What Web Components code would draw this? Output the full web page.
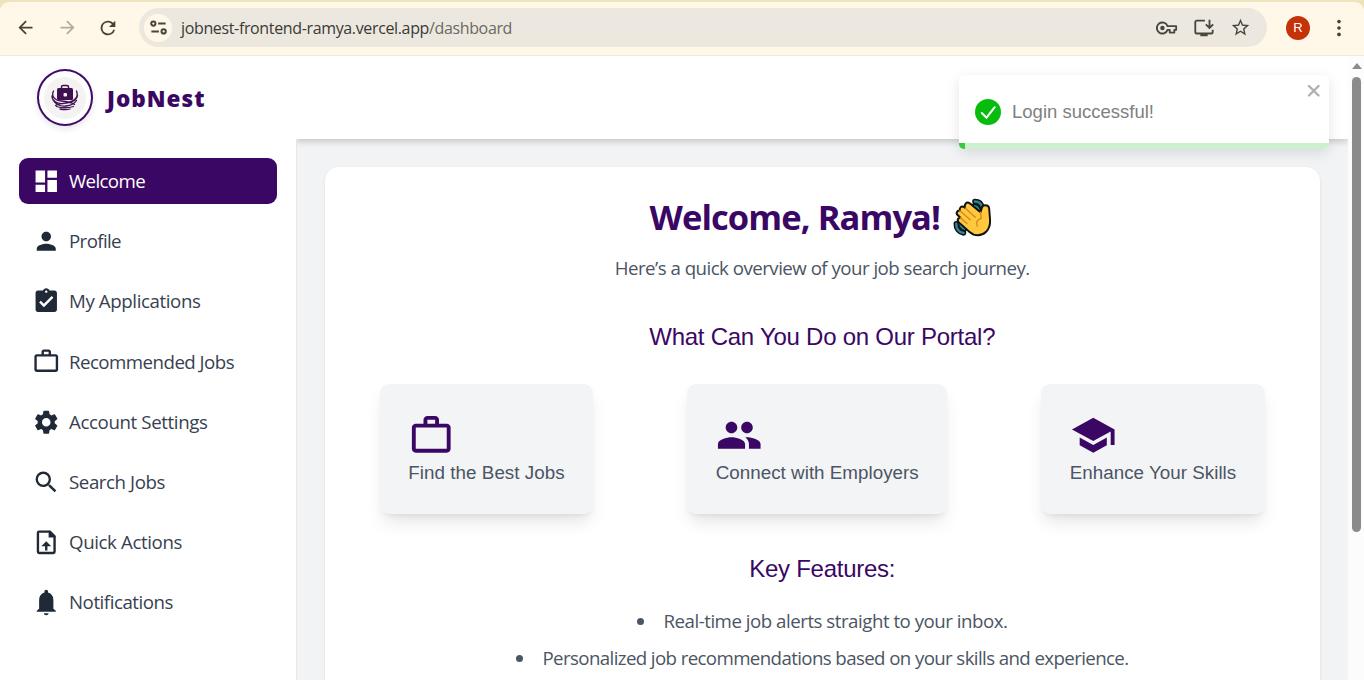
<!DOCTYPE html>
<html lang="en"><head><meta charset="utf-8"><title>JobNest</title>
<style>
html,body{margin:0;height:100%;overflow:hidden}
body{font-family:"Open Sans","Noto Sans",sans-serif;color:#1f2937;background:#fff}
</style></head><body>
<job-app></job-app>
<script>
const ICONS={
dashboard:'<path d="M3 13h8V3H3v10zm0 8h8v-6H3v6zm10 0h8V11h-8v10zm0-18v6h8V3h-8z"/>',
person:'<path d="M12 12c2.21 0 4-1.79 4-4s-1.79-4-4-4-4 1.79-4 4 1.79 4 4 4zm0 2c-2.67 0-8 1.34-8 4v2h16v-2c0-2.66-5.33-4-8-4z"/>',
assignment:'<path d="M19 3h-4.18C14.4 1.84 13.3 1 12 1c-1.3 0-2.4.84-2.82 2H5c-1.1 0-2 .9-2 2v14c0 1.1.9 2 2 2h14c1.1 0 2-.9 2-2V5c0-1.1-.9-2-2-2zm-7 0c.55 0 1 .45 1 1s-.45 1-1 1-1-.45-1-1 .45-1 1-1zm-2 14l-4-4 1.41-1.41L10 14.17l6.59-6.59L18 9l-8 8z"/>',
work:'<path fill-rule="evenodd" d="M14 6V4h-4v2h4zM4 8v11h16V8H4zm16-2c1.11 0 2 .89 2 2v11c0 1.11-.89 2-2 2H4c-1.11 0-2-.89-2-2l.01-11c0-1.11.88-2 1.99-2h4V4c0-1.11.89-2 2-2h4c1.11 0 2 .89 2 2v2h4z"/>',
settings:'<path d="M19.14 12.94c.04-.3.06-.61.06-.94 0-.32-.02-.64-.07-.94l2.03-1.58a.49.49 0 0 0 .12-.61l-1.92-3.32a.488.488 0 0 0-.59-.22l-2.39.96c-.5-.38-1.03-.7-1.62-.94l-.36-2.54a.484.484 0 0 0-.48-.41h-3.84c-.24 0-.43.17-.47.41l-.36 2.54c-.59.24-1.13.57-1.62.94l-2.39-.96c-.22-.08-.47 0-.59.22L2.74 8.87c-.12.21-.08.47.12.61l2.03 1.58c-.05.3-.09.63-.09.94s.02.64.07.94l-2.03 1.58a.49.49 0 0 0-.12.61l1.92 3.32c.12.22.37.29.59.22l2.39-.96c.5.38 1.03.7 1.62.94l.36 2.54c.05.24.24.41.48.41h3.84c.24 0 .44-.17.47-.41l.36-2.54c.59-.24 1.13-.56 1.62-.94l2.39.96c.22.08.47 0 .59-.22l1.92-3.32c.12-.22.07-.47-.12-.61l-2.01-1.58zM12 15.6c-1.98 0-3.6-1.62-3.6-3.6s1.62-3.6 3.6-3.6 3.6 1.62 3.6 3.6-1.62 3.6-3.6 3.6z"/>',
search:'<path d="M15.5 14h-.79l-.28-.27A6.471 6.471 0 0 0 16 9.5 6.5 6.5 0 1 0 9.5 16c1.61 0 3.09-.59 4.23-1.57l.27.28v.79l5 4.99L20.49 19l-4.99-5zm-6 0C7.01 14 5 11.99 5 9.5S7.01 5 9.5 5 14 7.01 14 9.5 11.99 14 9.5 14z"/>',
upload:'<path fill="none" stroke="currentColor" stroke-width="2" stroke-linejoin="round" d="M15 3H6a1 1 0 0 0-1 1v16a1 1 0 0 0 1 1h12a1 1 0 0 0 1-1V7z"/><path d="M14 3v5h5l1-1-5-5zM12 11.2L7.8 15.4H11V19h2v-3.600h3.200z"/>',
bell:'<path d="M12 23c1.100 0 2-.7 2-1.700h-4c0 1 .9 1.700 2 1.700zm6-5.500V10c0-3.100-1.600-5.400-4.500-6.200V3c0-.83-.67-1.500-1.500-1.500s-1.500.67-1.500 1.500v.8C7.600 4.600 6 6.900 6 10v7.500l-2 1.700v.8h16v-.8z"/>',
people:'<path d="M16 11c1.66 0 2.990-1.340 2.990-3S17.660 5 16 5s-3 1.340-3 3 1.340 3 3 3zm-8 0c1.660 0 2.990-1.340 2.990-3S9.660 5 8 5 5 6.340 5 8s1.340 3 3 3zm0 2c-2.330 0-7 1.170-7 3.500V19h14v-2.500C15 14.170 10.330 13 8 13zm8 0c-.29 0-.62.02-.97.05 1.160.84 1.970 1.970 1.970 3.450V19h6v-2.500c0-2.330-4.670-3.500-7-3.500z"/>',
school:'<path d="M5 13.180v4L12 21l7-3.820v-4L12 17l-7-3.820zM12 3L1 9l11 6 9-4.910V17h2V9L12 3z"/>',
back:'<path d="M20 11H7.830l5.590-5.590L12 4l-8 8 8 8 1.410-1.410L7.830 13H20z"/>',
forward:'<path d="M12 4l-1.410 1.410L16.170 11H4v2h12.170l-5.580 5.590L12 20l8-8z"/>',
reload:'<path d="M17.650 6.350A8 8 0 1 0 19.730 14h-2.080A6 6 0 1 1 12 6c1.660 0 3.140.69 4.220 1.780L13 11h7V4z"/>',
tune:'<g fill="none" stroke="currentColor" stroke-width="2.500"><circle cx="5.500" cy="7" r="2.700"/><path d="M11.500 7h9.500M3 17h9.500"/><circle cx="18.500" cy="17" r="2.700"/></g>',
key:'<path fill="none" stroke="currentColor" stroke-width="2" stroke-linejoin="round" d="M12.600 10A6 6 0 1 0 12.600 14H15v3h5v-3h2v-4z"/><circle cx="7" cy="12" r="2.400"/>',
install:'<path fill="none" stroke="currentColor" stroke-width="2" d="M13 4H4a1.500 1.500 0 0 0-1.500 1.500v11A1.500 1.500 0 0 0 4 18h16a1.500 1.500 0 0 0 1.500-1.500V14M18 3v8M14 8l4 4 4-4"/><path d="M8 18h8v3H8z"/>',
star:'<path d="M22 9.240l-7.190-.62L12 2 9.190 8.630 2 9.240l5.460 4.730L5.820 21 12 17.270 18.180 21l-1.630-7.030L22 9.240zM12 15.400l-3.760 2.270 1-4.280-3.320-2.880 4.380-.38L12 6.100l1.710 4.040 4.380.38-3.320 2.880 1 4.280L12 15.400z"/>',
more:'<circle cx="12" cy="5" r="2"/><circle cx="12" cy="12" r="2"/><circle cx="12" cy="19" r="2"/>',
close:'<path fill="none" stroke="currentColor" stroke-width="4.200" stroke-linecap="round" d="M3.500 3.500l17 17M20.500 3.500l-17 17"/>',
check:'<circle cx="12" cy="12" r="12" fill="#07bc0c"/><path fill="none" stroke="#fff" stroke-width="1.900" stroke-linecap="round" d="M6.300 13l4.300 4.200 7.600-9.600"/>',
wave:'<g stroke="#111" stroke-linejoin="round" stroke-linecap="round"><g fill="none"><path stroke-width="3.400" d="M13.500 2.200c2.300 0 4 1.500 4.600 3.900M13 5c1.500.2 2.400 1 2.800 2.500M2 15.800c-.1 3 1.700 5.300 4.500 5.700M4.700 15.800c.1 1.600.9 2.700 2.500 3.100"/><path stroke="#24899c" stroke-width="1.500" d="M13.500 2.200c2.300 0 4 1.500 4.600 3.900M13 5c1.500.2 2.400 1 2.800 2.500M2 15.800c-.1 3 1.700 5.300 4.500 5.700M4.700 15.800c.1 1.600.9 2.700 2.500 3.100"/></g><path stroke-width="1.200" fill="#ffc83d" d="M7.800 3.400c.7-.7 1.700-.7 2.500-.1l6.600 5.500.7-2.400c.3-1.400 1-2 2.200-2 1.500 0 2.500.9 2.500 2.600l.5 6.500c.2 3-.5 5.400-2.400 7.300-2.900 2.800-7 2.900-10.200.1L3.600 15c-.8-.8-.9-1.600-.4-2.300.4-.5.9-.6 1.400-.5L2.800 10.500c-.7-.8-.7-1.700-.1-2.300.4-.5 1-.6 1.600-.4-.3-.8-.2-1.500.3-2 .6-.6 1.500-.6 2.200-.1l.7.500c-.4-1-.3-2.100.3-2.800z"/><path fill="none" stroke="#d68a20" stroke-width=".9" d="M4.300 7.800l6.200 5.600M4.600 12.200l4 3.500M7.500 6.200l6.200 5.600M16.900 8.800l.5 3.800c-2.400.4-3.600 2.300-2.400 4.700"/></g>'
};
const def=(name,html,init)=>customElements.define(name,class extends HTMLElement{
  connectedCallback(){ if(this.shadowRoot)return;
    const t=document.createElement('template');
    t.innerHTML=typeof html==='function'?html(this):html;
    this.attachShadow({mode:'open'}).append(t.content.cloneNode(true));
    if(init)init(this);
  }});

def('ui-icon',e=>`<style>:host{display:block;flex:none;width:${e.getAttribute('size')}px;height:${e.getAttribute('size')}px}svg{display:block}</style>
<svg width="100%" height="100%" viewBox="0 0 24 24" fill="currentColor">${ICONS[e.getAttribute('name')]}</svg>`);

/* A single line of text tracked so that it spans the given width. */
def('fit-text','<style>:host{display:inline-block;white-space:nowrap;flex:none}</style><slot></slot>',e=>{
  const w=+e.getAttribute('w'),n=e.textContent.length;
  e.style.letterSpacing='0px';
  e.style.letterSpacing=((w-e.getBoundingClientRect().width)/n).toFixed(3)+'px';
});

def('browser-bar',`<style>
:host{display:block;height:56px;flex:none;background:#efe3bb;box-sizing:border-box;padding-top:2px;font-family:"Open Sans",sans-serif}
.bar{height:54px;box-sizing:border-box;background:#fff8e9;border-radius:9px 9px 0 0;border-bottom:1px solid #efe9df;display:flex;align-items:center;padding:0 15px 2px;color:#474330}
.f{color:#b0aca0}.r{margin-left:19px}
.box{flex:1;height:39px;border-radius:20px;background:#ece8e0;margin:0 19px 0 20px;display:flex;align-items:center;padding:0 16px 0 5px;color:#47463c}
.site{width:28px;height:28px;border-radius:50%;background:#fff8e9;display:flex;align-items:center;justify-content:center;margin-right:9px}
.url{font-size:16px;line-height:24px;color:#3b3a35;display:flex}.url .p{color:#6b6963}
.sp{flex:1}.acts{display:flex;gap:15px;align-items:center}
.av{width:24px;height:24px;border-radius:50%;background:#c4320a;color:#fff;font:13px/24px "Liberation Sans",sans-serif;text-align:center;margin-right:18px}
</style><div class="bar"><ui-icon name="back" size="21"></ui-icon><ui-icon class="r f" name="forward" size="21" style="margin-left:21px"></ui-icon><ui-icon class="r" name="reload" size="22"></ui-icon>
<div class="box"><div class="site"><ui-icon name="tune" size="19"></ui-icon></div>
<div class="url"><fit-text w="248">jobnest-frontend-ramya.vercel.app</fit-text><fit-text class="p" w="83">/dashboard</fit-text></div><div class="sp"></div>
<div class="acts"><ui-icon name="key" size="22"></ui-icon><ui-icon name="install" size="22"></ui-icon><ui-icon name="star" size="21"></ui-icon></div></div>
<div class="av">R</div><ui-icon name="more" size="22" style="margin-right:-1px"></ui-icon></div>`);

def('brand-logo',`<style>
:host{display:flex;align-items:center;height:83px;padding-left:37px;color:#3b0764}
.c{box-sizing:border-box;width:56px;height:57px;border:2px solid #3f0a6b;border-radius:50%;display:flex;align-items:center;justify-content:center;box-shadow:0 3px 6px #0000001a;background:#fff}
.n{margin-left:14px;font-weight:800;font-size:22.500px;line-height:30px;padding-top:2px}
svg{display:block}</style>
<div class="c"><svg width="42" height="42" viewBox="0 0 42 42"><circle cx="21" cy="21" r="21" fill="#f5f3f2"/>
<g fill="none" stroke="#3e1050" stroke-linecap="round"><path stroke-width="1.500" d="M17.500 11.500V10q0-1.500 1.500-1.500h4q1.500 0 1.500 1.500v1.500"/><path stroke-width="1.300" d="M9.500 14c-2.500 5 1 9.500 8 10 6 .4 10 1.500 13 3.500M8 19c0 5 5 8 11 7.500 6-.5 13-1.500 14.500-8M32.500 14c2.500 6-2 10-8 11.500-5 1.200-10 1-13 3M9 23c3 5 8 6.500 13 6 5-.5 8-1.500 10.500-5.500M12.500 29.500c5 1.500 12 1.500 17 0M16 32c4 1 7 1 10 0"/></g>
<rect x="13" y="11" width="16" height="12" rx="1.500" fill="#3e1050"/><rect x="19.500" y="16" width="3.500" height="3.500" rx="1" fill="#f5f3f2"/></svg></div>
<fit-text class="n" w="98.500">JobNest</fit-text>`);

def('nav-item',e=>`<style>
:host{display:flex;align-items:center;box-sizing:border-box;height:46px;border-radius:9px;padding-left:12.500px;font-size:18.700px;line-height:28px;color:#374151}
:host([active]){background:#3b0764;color:#fff}
ui-icon{margin-right:9px;color:#1f2937}:host([active]) ui-icon{color:#fff}
</style><ui-icon name="${e.getAttribute('icon')}" size="28.500"></ui-icon><fit-text w="${e.getAttribute('w')}">${e.getAttribute('label')}</fit-text>`);

def('side-nav',`<style>:host{display:flex;flex-direction:column;width:296px;flex:none;background:#fff;z-index:1}
nav{flex:1;display:flex;flex-direction:column;gap:14.200px;padding:19px 19.500px 0 19px;margin-right:-1px;border-right:1px solid #e5e7eb}
brand-logo{box-sizing:border-box;height:83px}</style>
<brand-logo></brand-logo><nav>
<nav-item active icon="dashboard" label="Welcome" w="76"></nav-item>
<nav-item icon="person" label="Profile" w="52"></nav-item>
<nav-item icon="assignment" label="My Applications" w="131.500"></nav-item>
<nav-item icon="work" label="Recommended Jobs" w="165"></nav-item>
<nav-item icon="settings" label="Account Settings" w="138.500"></nav-item>
<nav-item icon="search" label="Search Jobs" w="96"></nav-item>
<nav-item icon="upload" label="Quick Actions" w="113"></nav-item>
<nav-item icon="bell" label="Notifications" w="104"></nav-item></nav>`);

def('portal-card',e=>`<style>:host{display:block;box-sizing:border-box;height:130px;padding:28px 28.500px;background:#f3f4f6;border-radius:9px;box-shadow:0 11px 17px -3px #0000001a,0 4px 7px -4px #0000001a;color:#4b5563;font:18.800px/27px "Liberation Sans",sans-serif}
ui-icon{color:#3b0764}</style><ui-icon name="${e.getAttribute('icon')}" size="46.500"></ui-icon><fit-text w="${e.getAttribute('w')}"><slot></slot></fit-text>`,e=>{
  const f=e.shadowRoot.querySelector('fit-text');
  f.style.letterSpacing='0px';
  f.style.letterSpacing=((+e.getAttribute('w')-f.getBoundingClientRect().width)/e.textContent.length).toFixed(3)+'px';
});

def('welcome-panel',`<style>
:host{display:block;box-sizing:border-box;height:700px;padding-top:28px;background:#fff;border-radius:14px;box-shadow:0 1px 3px #0000001a;text-align:center;color:#4b5563}
h1,h2,p,ul{margin:0;font-weight:400}
h1{display:flex;justify-content:center;align-items:center;font-size:34.500px;line-height:42px;height:42px;font-weight:700;color:#3b0764;gap:13px;padding:1px 3px 0 0}
p{margin-top:16px;font-size:18.700px;line-height:28px;height:28px}
h2{font:24px/32px "Liberation Sans",sans-serif;height:32px;color:#3b0764;margin-top:39px}
.cards{display:flex;justify-content:center;gap:94px;margin-top:31px;text-align:left}
h2.k{margin-top:39px}
ul{padding:0;list-style:none;margin-top:22px;font-size:18.700px;line-height:28px}
li{display:flex;align-items:center;justify-content:center;height:28px;margin-bottom:9px}
li::before{content:"";width:7px;height:7px;border-radius:50%;background:#4b5563;margin-right:19.500px}
</style><h1><fit-text w="290.500">Welcome, Ramya!</fit-text><ui-icon name="wave" size="39"></ui-icon></h1>
<p><fit-text w="415">Here’s a quick overview of your job search journey.</fit-text></p>
<h2><fit-text w="346">What Can You Do on Our Portal?</fit-text></h2>
<div class="cards"><portal-card icon="work" w="156.500">Find the Best Jobs</portal-card><portal-card icon="people" w="203">Connect with Employers</portal-card><portal-card icon="school" w="166.500">Enhance Your Skills</portal-card></div>
<h2 class="k"><fit-text w="146">Key Features:</fit-text></h2>
<ul><li><fit-text w="344">Real-time job alerts straight to your inbox.</fit-text></li><li><fit-text w="586">Personalized job recommendations based on your skills and experience.</fit-text></li></ul>`);

def('toast-message',`<style>
:host{position:absolute;right:35px;top:75px;width:370px;height:74px;box-sizing:border-box;border-radius:5px;background:#fff;box-shadow:0 4px 14px #0000001c;display:flex;flex-direction:column;overflow:hidden;z-index:3;color:#808080;font:18.500px/28px "Liberation Sans",sans-serif}
.b{flex:1;display:flex;align-items:center;padding:5px 9px 0 16px}.b fit-text{margin-left:11px}
.x{margin-left:auto;align-self:flex-start;margin-top:4px;color:#b0b0b0}
.p{height:6px;background:#cdf1ce}.p i{display:block;height:6px;width:6px;background:#39c93d}
</style><div class="b"><ui-icon name="check" size="26"></ui-icon><fit-text w="142">Login successful!</fit-text><ui-icon class="x" name="close" size="13.500"></ui-icon></div><div class="p"><i></i></div>`);

def('scroll-rail',`<style>:host{width:16px;flex:none;background:#fcfcfc;display:flex;flex-direction:column;align-items:center;z-index:2}
.a{margin-top:7px;border:5.500px solid transparent;border-top:0;border-bottom:6px solid #8b8b8b}
.t{margin-top:8px;width:9px;height:455px;border-radius:5px;background:#8b8b8b;margin-left:1px}
.a{margin-left:1px}</style><div class="a"></div><div class="t"></div>`);

def('job-app',`<style>
:host{display:flex;flex-direction:column;width:1364px;height:680px;overflow:hidden;position:relative}
.v{display:flex;flex:1;min-height:0}
main{flex:1;min-width:0;background:#f2f3f5;overflow:hidden}
header{height:82.500px;background:#fff;box-shadow:0 3px 6px #0000002b}
welcome-panel{margin:28.500px 28px 0 28.500px}
</style><browser-bar></browser-bar><div class="v"><side-nav></side-nav><main><header></header><welcome-panel></welcome-panel></main><scroll-rail></scroll-rail></div><toast-message></toast-message>`);
</script></body></html>
